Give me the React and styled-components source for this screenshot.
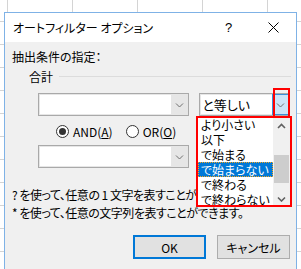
import React from "react";
import styled, { createGlobalStyle } from "styled-components";

const GlobalStyle = createGlobalStyle`
  html, body {
    margin: 0;
    padding: 0;
    width: 301px;
    height: 269px;
    overflow: hidden;
  }
  body {
    background-color: #ffffff;
    background-image:
      linear-gradient(to right, #d4d4d4 1px, transparent 1px),
      linear-gradient(to bottom, #d4d4d4 1px, transparent 1px);
    background-size: 65px 23px;
    background-position: 7px 21px;
    font-family: "Noto Sans CJK JP", "Noto Sans", sans-serif;
    font-feature-settings: "palt";
    color: #000;
  }
`;

const Page = styled.div`
  padding: 12px 0 0 4px;
`;

const Dialog = styled.div`
  position: relative;
  box-sizing: border-box;
  width: 293px;
  height: 262px;
  border: 1px solid #7fb2e6;
  background: #f0f0f0;
  display: flex;
  flex-direction: column;
`;

const TitleBar = styled.div`
  height: 29px;
  background: #ffffff;
  display: flex;
  align-items: center;
`;

const TitleText = styled.div`
  flex: 1;
  padding-left: 8px;
  font-size: 12px;
  line-height: 16px;
  white-space: nowrap;
`;

const TitleButton = styled.div`
  width: 45px;
  height: 29px;
  display: flex;
  align-items: center;
  justify-content: center;
  font-family: "Liberation Sans", sans-serif;
  font-size: 13px;
`;

const Content = styled.div`
  display: flex;
  flex-direction: column;
  padding: 0 6px 0 7px;
  font-size: 12px;
`;

const Heading = styled.div`
  margin-top: 7px;
  line-height: 16px;
  white-space: nowrap;
`;

const GroupHeader = styled.div`
  margin-top: 3px;
  height: 16px;
  display: flex;
  align-items: center;
  gap: 6px;
  padding-left: 17px;
`;

const GroupLine = styled.div`
  flex: 1;
  height: 1px;
  background: #dcdcdc;
  margin-right: -1px;
`;

const ComboRow = styled.div`
  margin-top: ${(p) => p.$top}px;
  display: flex;
  gap: 10px;
  padding-left: 26px;
`;

const Combo = styled.div`
  box-sizing: border-box;
  width: ${(p) => p.$width}px;
  height: 23px;
  border: 1px solid #a9a9a9;
  background: #e6e6e6;
  padding: 1px 0 1px 1px;
  display: flex;
`;

const EditField = styled.div`
  flex: 1;
  background: #ffffff;
  display: flex;
  align-items: center;
  padding-left: 1px;
  font-size: 13px;
  white-space: nowrap;
`;

const DropButton = styled.div`
  box-sizing: border-box;
  width: 17px;
  margin: -1px 0 -1px 0;
  display: flex;
  align-items: center;
  justify-content: center;
  background: ${(p) => (p.$pressed ? "#cce4f7" : "transparent")};
  border: ${(p) => (p.$pressed ? "1px solid #3c8fd8" : "none")};
`;

const RadioRow = styled.div`
  margin-top: 7px;
  height: 16px;
  display: flex;
  align-items: center;
  padding-left: 44px;
`;

const RadioItem = styled.label`
  display: flex;
  align-items: center;
  gap: 4px;
  margin-right: 13px;
  font-size: 12px;
  white-space: nowrap;
`;

const RadioCircle = styled.span`
  box-sizing: border-box;
  width: 13px;
  height: 13px;
  border-radius: 50%;
  border: 1px solid #333333;
  background: #ffffff;
  display: flex;
  align-items: center;
  justify-content: center;
  &::after {
    content: "";
    width: 7px;
    height: 7px;
    border-radius: 50%;
    background: ${(p) => (p.$checked ? "#333333" : "transparent")};
  }
`;

const Help = styled.div`
  margin-top: 18px;
  line-height: 18px;
  letter-spacing: -0.5px;
  white-space: nowrap;
`;

const ButtonRow = styled.div`
  margin-top: 13px;
  display: flex;
  justify-content: flex-end;
  gap: 11px;
`;

const Button = styled.div`
  box-sizing: border-box;
  width: 73px;
  height: 24px;
  background: #e1e1e1;
  border: ${(p) => (p.$default ? "2px solid #0078d7" : "1px solid #adadad")};
  display: flex;
  align-items: center;
  justify-content: center;
  font-size: 12px;
`;

const ListPopup = styled.div`
  position: absolute;
  left: 191px;
  top: 103px;
  box-sizing: border-box;
  width: 96px;
  height: 91px;
  padding: 1px 2px 0 2px;
  background: #ffffff;
  display: flex;
  overflow: hidden;
`;

const Items = styled.div`
  flex: 1;
  display: flex;
  flex-direction: column;
`;

const Item = styled.div`
  box-sizing: border-box;
  height: 15px;
  flex-shrink: 0;
  display: flex;
  align-items: center;
  padding-left: 2px;
  font-size: 12px;
  white-space: nowrap;
  background: ${(p) => (p.$selected ? "#0078d7" : "transparent")};
  color: ${(p) => (p.$selected ? "#ffffff" : "#000000")};
  border: 1px dotted ${(p) => (p.$selected ? "#f5a623" : "transparent")};
`;

const ScrollBar = styled.div`
  width: 17px;
  background: #f0f0f0;
  display: flex;
  flex-direction: column;
`;

const ScrollArrow = styled.div`
  height: 17px;
  display: flex;
  align-items: center;
  justify-content: center;
`;

const Track = styled.div`
  flex: 1;
  display: flex;
  flex-direction: column;
  align-items: center;
`;

const Thumb = styled.div`
  margin-top: 21px;
  width: 15px;
  height: 28px;
  background: #cdcdcd;
`;

const RedMark = styled.div`
  position: absolute;
  box-sizing: border-box;
  left: ${(p) => p.$left}px;
  top: ${(p) => p.$top}px;
  width: ${(p) => p.$width}px;
  height: ${(p) => p.$height}px;
  border: 2px solid #ff0000;
  pointer-events: none;
`;

const Chevron = ({ up, color = "#707070", w = 1 }) => (
  <svg width="9" height="6" viewBox="0 0 9 6">
    <polyline
      points={up ? "1,5 4.5,1.5 8,5" : "1,1.5 4.5,5 8,1.5"}
      fill="none"
      stroke={color}
      strokeWidth={w}
    />
  </svg>
);

const ComboBox = ({ width, text, pressed }) => (
  <Combo $width={width}>
    <EditField>{text}</EditField>
    <DropButton $pressed={pressed}>
      <Chevron />
    </DropButton>
  </Combo>
);

const items = ["より小さい", "以下", "で始まる", "で始まらない", "で終わる", "で終わらない"];

export default function App() {
  return (
    <>
      <GlobalStyle />
      <Page>
        <Dialog>
          <TitleBar>
            <TitleText>オートフィルター オプション</TitleText>
            <TitleButton>?</TitleButton>
            <TitleButton>
              <svg width="11" height="11" viewBox="0 0 11 11">
                <path d="M0.5 0.5 L10.5 10.5 M10.5 0.5 L0.5 10.5" stroke="#000" strokeWidth="1" />
              </svg>
            </TitleButton>
          </TitleBar>
          <Content>
            <Heading>抽出条件の指定：</Heading>
            <GroupHeader>
              <span>合計</span>
              <GroupLine />
            </GroupHeader>
            <ComboRow $top={9}>
              <ComboBox width={152} text="" />
              <ComboBox width={91} text="と等しい" pressed />
            </ComboRow>
            <RadioRow>
              <RadioItem>
                <RadioCircle $checked />
                <span>
                  AND(<u>A</u>)
                </span>
              </RadioItem>
              <RadioItem>
                <RadioCircle />
                <span>
                  OR(<u>O</u>)
                </span>
              </RadioItem>
            </RadioRow>
            <ComboRow $top={6}>
              <ComboBox width={152} text="" />
              <ComboBox width={91} text="" />
            </ComboRow>
            <Help>
              ? を使って、任意の 1 文字を表すことができます。
              <br />* を使って、任意の文字列を表すことができます。
            </Help>
            <ButtonRow>
              <Button $default>OK</Button>
              <Button>キャンセル</Button>
            </ButtonRow>
          </Content>
          <ListPopup>
            <Items>
              {items.map((t, i) => (
                <Item key={t} $selected={i === 3}>
                  {t}
                </Item>
              ))}
            </Items>
            <ScrollBar>
              <ScrollArrow>
                <Chevron up color="#606060" w={1.6} />
              </ScrollArrow>
              <Track>
                <Thumb />
              </Track>
              <ScrollArrow>
                <Chevron color="#606060" w={1.6} />
              </ScrollArrow>
            </ScrollBar>
          </ListPopup>
          <RedMark $left={191} $top={103} $width={96} $height={91} />
          <RedMark $left={268} $top={75} $width={17} $height={30} />
        </Dialog>
      </Page>
    </>
  );
}
